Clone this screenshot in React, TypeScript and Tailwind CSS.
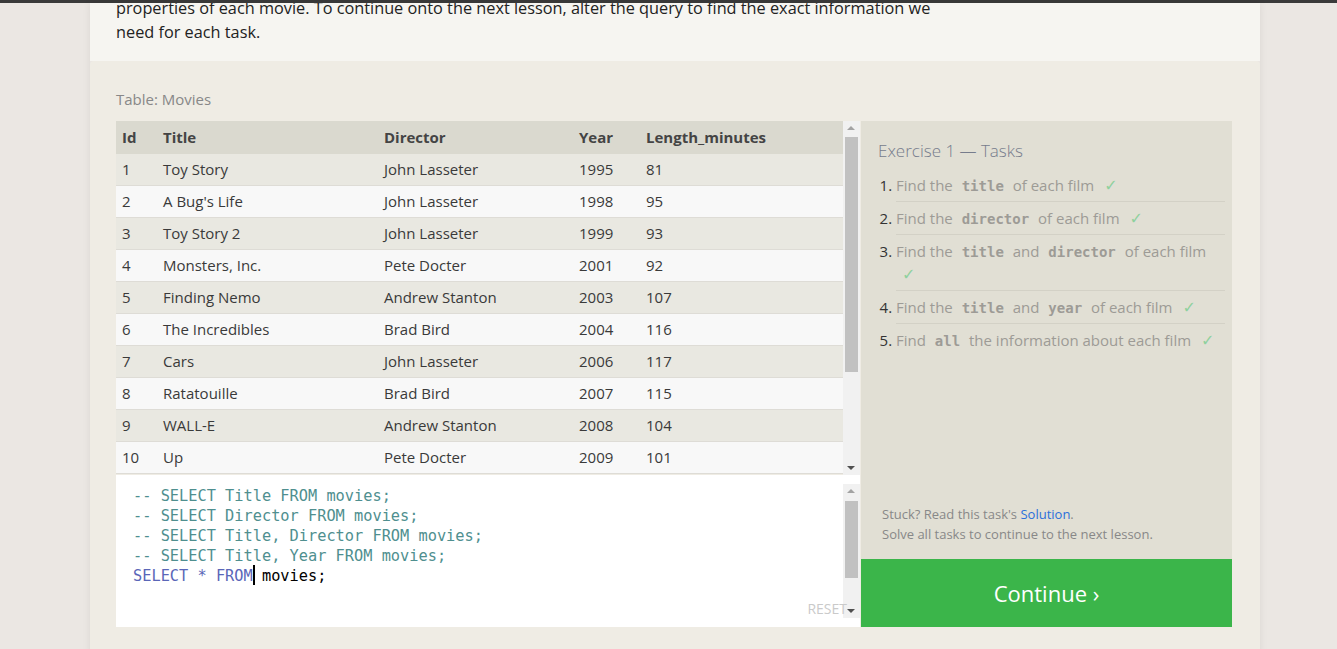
import React from "react";

type Movie = { id: number; title: string; director: string; year: number; length: number };

const movies: Movie[] = [
  { id: 1, title: "Toy Story", director: "John Lasseter", year: 1995, length: 81 },
  { id: 2, title: "A Bug's Life", director: "John Lasseter", year: 1998, length: 95 },
  { id: 3, title: "Toy Story 2", director: "John Lasseter", year: 1999, length: 93 },
  { id: 4, title: "Monsters, Inc.", director: "Pete Docter", year: 2001, length: 92 },
  { id: 5, title: "Finding Nemo", director: "Andrew Stanton", year: 2003, length: 107 },
  { id: 6, title: "The Incredibles", director: "Brad Bird", year: 2004, length: 116 },
  { id: 7, title: "Cars", director: "John Lasseter", year: 2006, length: 117 },
  { id: 8, title: "Ratatouille", director: "Brad Bird", year: 2007, length: 115 },
  { id: 9, title: "WALL-E", director: "Andrew Stanton", year: 2008, length: 104 },
  { id: 10, title: "Up", director: "Pete Docter", year: 2009, length: 101 },
];

const comments = [
  "-- SELECT Title FROM movies;",
  "-- SELECT Director FROM movies;",
  "-- SELECT Title, Director FROM movies;",
  "-- SELECT Title, Year FROM movies;",
];

function Code({ children }: { children: React.ReactNode }) {
  return (
    <code className="px-[5px] font-['DejaVu_Sans_Mono',monospace] text-[14px] font-bold leading-none text-[#9d9b96]">
      {children}
    </code>
  );
}

function Check() {
  return <span className="ml-[6px] font-['DejaVu_Sans',sans-serif] text-[16px] leading-none text-[#8fd19e]">✓</span>;
}

function Scrollbar({ thumbTop, thumbHeight }: { thumbTop: number; thumbHeight: number }) {
  return (
    <div className="relative w-[17px] shrink-0 bg-[#f1f1f1]">
      <div className="absolute left-[4px] top-[5px] h-0 w-0 border-x-[4px] border-b-[4px] border-x-transparent border-b-[#a3a3a3]" />
      <div
        className="absolute left-[2px] w-[13px] bg-[#c1c1c1]"
        style={{ top: thumbTop, height: thumbHeight }}
      />
      <div className="absolute bottom-[5px] left-[4px] h-0 w-0 border-x-[4px] border-t-[4px] border-x-transparent border-t-[#505050]" />
    </div>
  );
}

export default function App() {
  return (
    <div className="min-h-screen bg-[#ebe7e3] font-['Open_Sans',sans-serif]">
      <div className="h-[3px] bg-[#3a3a3a]" />
      <div className="ml-[90px] w-[1170px] shadow-[0_0_8px_rgba(0,0,0,0.07)]">
        <div className="h-[58px] overflow-hidden bg-[#f6f5f1] px-[26px]">
          <p className="mt-[-7px] text-[16.3px] leading-[24px] text-[#222]">
            properties of each movie. To continue onto the next lesson, alter the query to find the exact information we
            <br />
            need for each task.
          </p>
        </div>

        <div className="rounded-t-[4px] bg-[#efece4] pl-[26px] pr-[28px] pt-[28px] pb-[30px]">
          <div className="mb-[12px] text-[15px] leading-[20px] text-[#888]">Table: Movies</div>

          <div className="flex gap-[1px]">
            <div className="flex w-[744px] flex-col">
              <div className="flex h-[354px]">
                <div className="flex-1 text-[15px] text-[#3a3a3a]">
                  <div className="flex h-[33px] items-center bg-[#dad9cf] font-bold text-[#444]">
                    <div className="w-[47px] pl-[6px]">Id</div>
                    <div className="w-[221px]">Title</div>
                    <div className="w-[195px]">Director</div>
                    <div className="w-[67px]">Year</div>
                    <div className="flex-1">Length_minutes</div>
                  </div>
                  {movies.map((m, i) => (
                    <div
                      key={m.id}
                      className={`flex h-[32px] items-center border-b border-[#dedcd6] ${
                        i % 2 === 0 ? "bg-[#e9e8e1]" : "bg-[#f8f8f8]"
                      }`}
                    >
                      <div className="w-[47px] pl-[6px]">{m.id}</div>
                      <div className="w-[221px]">{m.title}</div>
                      <div className="w-[195px]">{m.director}</div>
                      <div className="w-[67px]">{m.year}</div>
                      <div className="flex-1">{m.length}</div>
                    </div>
                  ))}
                </div>
                <Scrollbar thumbTop={16} thumbHeight={235} />
              </div>

              <div className="relative flex h-[152px] bg-white py-[9px]">
                <div className="flex-1 pl-[17px] pt-[2px] font-['DejaVu_Sans_Mono',monospace] text-[15.3px] leading-[20px]">
                  {comments.map((c) => (
                    <div key={c} className="h-[20px] text-[#4f8f8f]">
                      {c}
                    </div>
                  ))}
                  <div className="relative h-[20px]">
                    <span className="text-[#5a66b8]">SELECT * FROM</span>
                    <span className="relative">
                      <span className="absolute left-0 top-[-2px] h-[20px] w-[2px] bg-black" />
                    </span>
                    <span className="text-black"> movies;</span>
                  </div>
                </div>
                <Scrollbar thumbTop={17} thumbHeight={77} />
                <div className="absolute bottom-[8px] right-[13px] text-[14px] leading-[20px] text-[#cacaca]">RESET</div>
              </div>
            </div>

            <div className="flex flex-1 flex-col bg-[#e1dfd4]">
              <div className="pl-[17px] pt-[18px]">
                <div className="text-[17px] font-light leading-[24px] text-[#767c8c]">Exercise 1 — Tasks</div>
              </div>
              <ol className="mt-[6px] list-decimal pl-[35px] pr-[7px] text-[15px] leading-[22px] text-[#9d9b96] marker:text-[#333]">
                <li className="border-b border-[#d3d1c6] py-[5px]">
                  Find the <Code>title</Code> of each film <Check />
                </li>
                <li className="border-b border-[#d3d1c6] py-[5px]">
                  Find the <Code>director</Code> of each film <Check />
                </li>
                <li className="border-b border-[#d3d1c6] pt-[5px] pb-[4px] leading-[23px]">
                  Find the <Code>title</Code> and <Code>director</Code> of each film <Check />
                </li>
                <li className="border-b border-[#d3d1c6] py-[5px]">
                  Find the <Code>title</Code> and <Code>year</Code> of each film <Check />
                </li>
                <li className="py-[5px]">
                  Find <Code>all</Code> the information about each film <Check />
                </li>
              </ol>
              <div className="mt-auto pb-[15px] pl-[21px] text-[13px] leading-[20px] text-[#888]">
                <div>
                  Stuck? Read this task's <span className="text-[#2a6fdb]">Solution</span>.
                </div>
                <div>Solve all tasks to continue to the next lesson.</div>
              </div>
              <div className="flex h-[68px] items-center justify-center bg-[#3bb54a] text-[22px] text-white">
                Continue ›
              </div>
            </div>
          </div>
        </div>
      </div>
    </div>
  );
}
